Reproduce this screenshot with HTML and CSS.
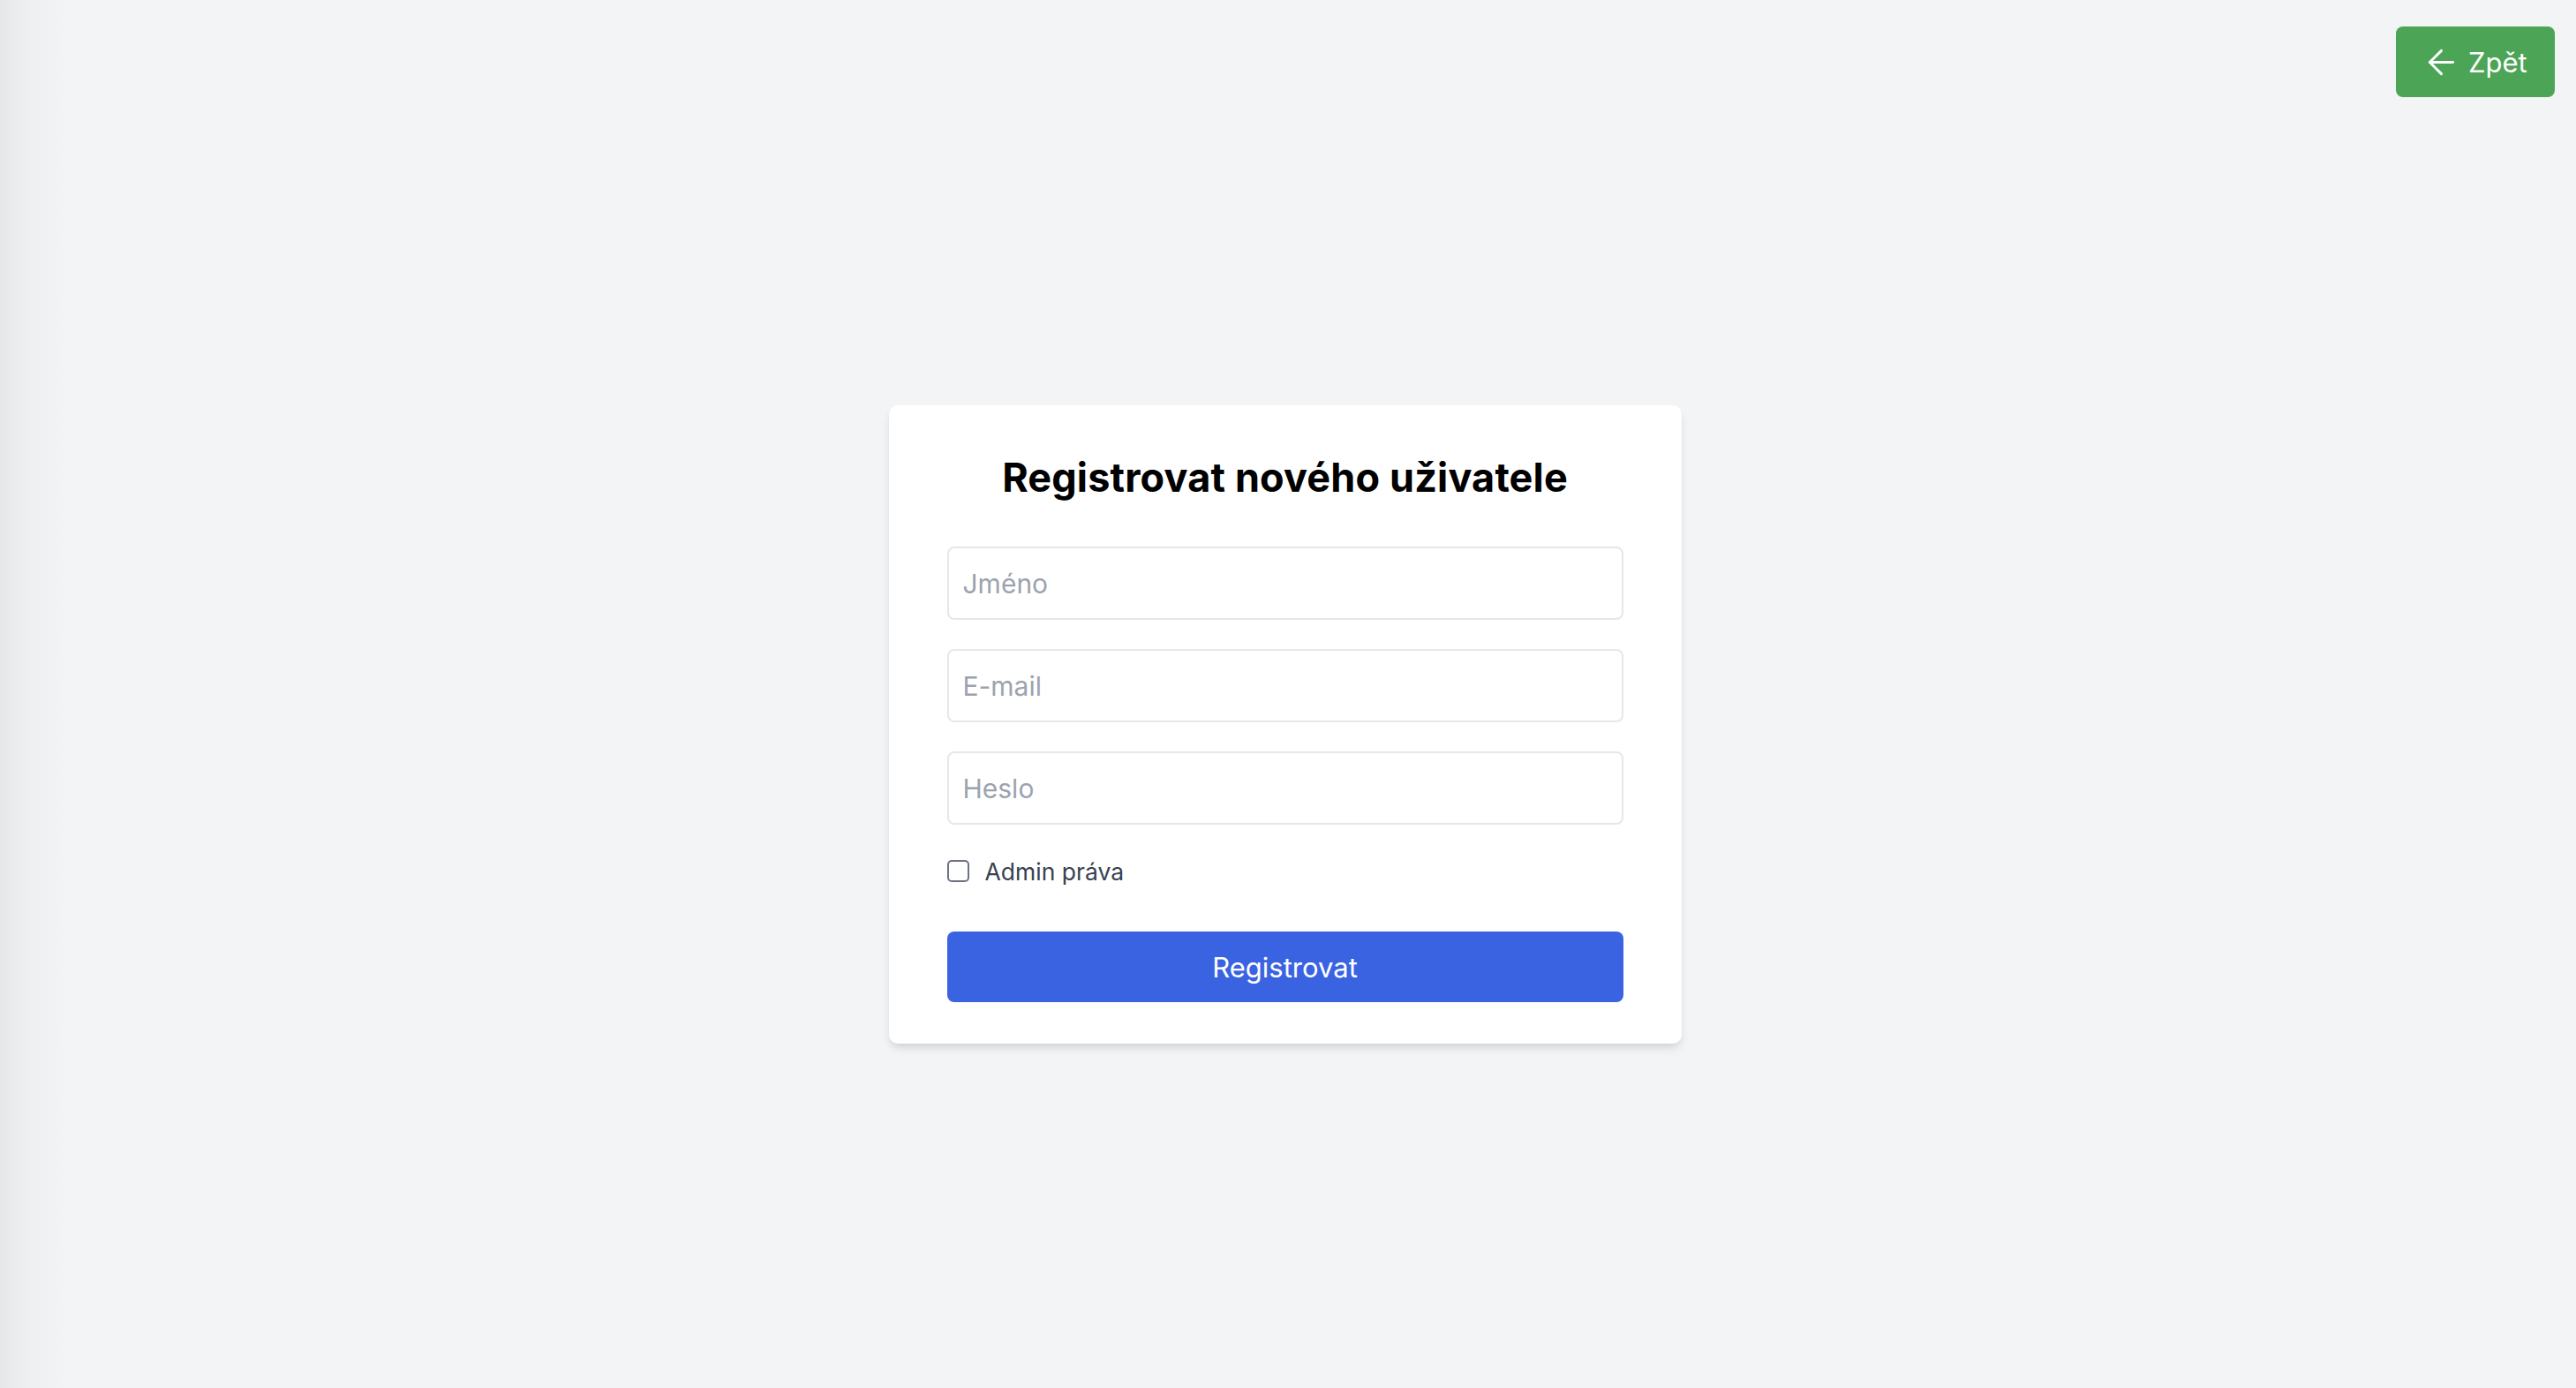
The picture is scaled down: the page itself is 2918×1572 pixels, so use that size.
FILE: index.html
```html
<!DOCTYPE html>
<html lang="cs">
<head>
<meta charset="utf-8">
<title>Registrovat nového uživatele</title>
<link rel="stylesheet" href="styles.css">
</head>
<body>
<a class="back-btn" href="#">
  <svg class="back-icon" viewBox="0 0 14 14" fill="none" stroke="currentColor" stroke-width="1.5" stroke-linecap="round" stroke-linejoin="round"><path d="M7 0.2 0.2 7 7 13.8"/><path d="M13.8 7H0.2"/></svg>
  <span>Zpět</span>
</a>
<main class="page">
  <div class="card">
    <h1 class="title">Registrovat nového uživatele</h1>
    <form class="form">
      <input class="field" type="text" placeholder="Jméno">
      <input class="field" type="email" placeholder="E-mail">
      <input class="field" type="password" placeholder="Heslo">
      <label class="check-row">
        <input class="check" type="checkbox">
        <span>Admin práva</span>
      </label>
      <button class="submit" type="button">Registrovat</button>
    </form>
  </div>
</main>
</body>
</html>
```

FILE: styles.css
```css
* { box-sizing: border-box; }
html, body { margin: 0; padding: 0; }
body {
  font-family: Inter, "Noto Sans", sans-serif;
  background: linear-gradient(to right, #e6e7e9 0px, #eeeff1 30px, #f3f4f6 80px, #f3f4f6 100%);
  min-height: 100vh;
  position: relative;
}
.back-btn {
  position: absolute;
  top: 30px;
  right: 24px;
  width: 180px;
  height: 80px;
  background: #4ca456;
  color: #fff;
  border-radius: 8px;
  display: flex;
  align-items: center;
  justify-content: flex-start;
  gap: 17px;
  padding-left: 38px;
  text-decoration: none;
  font-size: 31px;
  line-height: 1;
}
.back-icon { width: 27px; height: 27px; flex: none; overflow: visible; }
.page {
  min-height: 100vh;
  padding-top: 69px;
  padding-right: 7px;
  display: flex;
  align-items: center;
  justify-content: center;
}
.card {
  width: 898px;
  background: #fff;
  border-radius: 10px;
  padding: 52px 66px 47px 66px;
  box-shadow: 0 7px 12px -2px rgba(0,0,0,0.1), 0 4px 8px -4px rgba(0,0,0,0.1);
}
.title {
  margin: 0;
  text-align: center;
  font-size: 45px;
  line-height: 60px;
  font-weight: 700;
  color: #000;
  letter-spacing: 0.15px;
}
.form {
  display: flex;
  flex-direction: column;
  margin-top: 48px;
}
.field {
  display: block;
  width: 100%;
  height: 83px;
  border: 2px solid #e5e7eb;
  border-radius: 8px;
  padding: 0 16px;
  font-family: inherit;
  font-size: 30px;
  color: #111827;
  background: #fff;
  outline: none;
}
.field + .field { margin-top: 33px; }
.field::placeholder { color: #9ca3af; }
.check-row {
  display: flex;
  align-items: center;
  gap: 18px;
  margin-top: 40px;
  height: 25px;
  font-size: 26.5px;
  color: #374151;
}
.check {
  appearance: none;
  -webkit-appearance: none;
  margin: 0;
  width: 25px;
  height: 25px;
  border: 2px solid #6b7280;
  border-radius: 5px;
  background: #fff;
  flex: none;
}
.submit {
  margin-top: 56px;
  height: 80px;
  width: 100%;
  border: none;
  border-radius: 8px;
  background: #3a63e2;
  color: #fff;
  font-family: inherit;
  font-size: 31px;
  cursor: pointer;
}
```
